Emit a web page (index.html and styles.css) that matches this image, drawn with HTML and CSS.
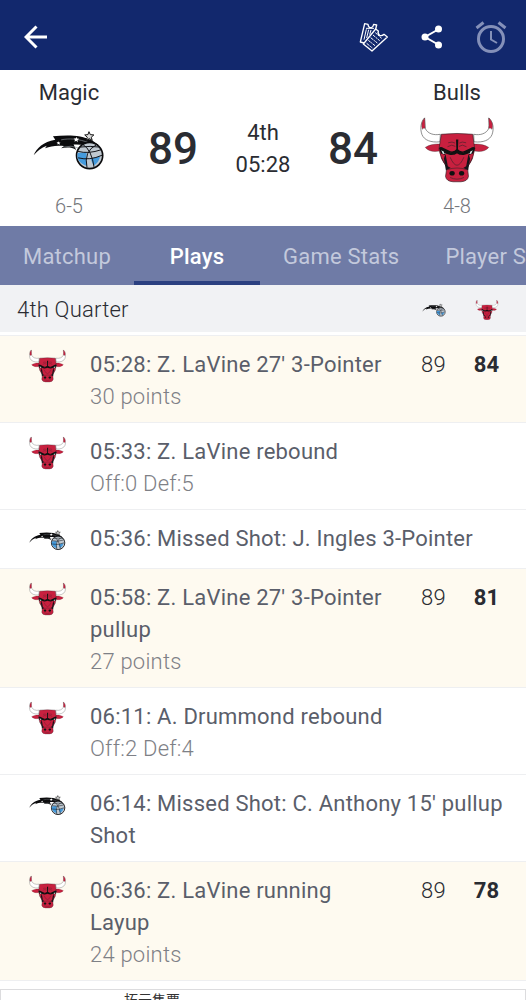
FILE: index.html
```html
<!DOCTYPE html>
<html lang="en">
    <head>
        <meta charset="UTF-8" />
        <meta name="viewport" content="width=device-width, initial-scale=1.0" />
        <title>Magic vs Bulls - Plays</title>
        <link rel="stylesheet" href="styles.css">
    </head>
    <body>
        <!-- Team logos -->
        <svg class="sprite" aria-hidden="true">
            <symbol id="bulls" viewBox="26 31 226 200">
                <path d="M88 83C68 87 49 81 42 65C40 54 42 43 40 33C29 45 25 64 32 84C39 101 59 109 87 106Z" fill="#fff" stroke="#555" stroke-width="2"/>
                <path d="M190 83C210 87 229 81 236 65C238 54 236 43 236 33C249 45 253 64 246 84C239 101 219 109 191 106Z" fill="#fff" stroke="#555" stroke-width="2"/>
                <path d="M40 33C31 43 29 55 33 68Q38 62 42 65C40 54 42 43 40 33Z" fill="#c8203f" stroke="#444" stroke-width="1"/>
                <path d="M236 33C247 43 250 55 246 68Q240 62 236 65C238 54 236 43 236 33Z" fill="#c8203f" stroke="#444" stroke-width="1"/>
                <path d="M87 113C70 112 55 115 42 123C51 134 67 138 86 134ZM191 113C208 112 223 115 236 123C227 134 211 138 192 134Z" fill="#c8203f" stroke="#222" stroke-width="1"/>
                <path d="M91 83Q139 78 187 83L193 128Q190 159 171 184L174 212Q171 227 151 228H127Q107 227 104 212L108 184Q88 159 84 128Z" fill="#c8203f" stroke="#311d24" stroke-width="2"/>
                <path d="M84 125Q89 118 98 125L119 135Q132 137 137 129L136 99H143L142 129Q147 137 160 135L181 125Q189 118 195 125L188 142Q171 150 151 147L139 140L127 147Q107 150 90 142Z" fill="#111"/>
                <path d="M101 141L119 137L139 151L159 137L177 141L172 156Q139 166 106 156Z" fill="#c8203f"/>
                <path d="M91 132L107 141L96 143ZM187 132L171 141L182 143Z" fill="#dce8e8"/>
                <path d="M104 143L111 181L120 186L105 193L99 157ZM174 143L167 181L158 186L173 193L179 157Z" fill="#16151a"/>
                <path d="M112 109Q125 104 133 110M146 110Q154 104 167 109M110 121Q124 112 134 120M145 120Q155 112 168 121M118 153Q139 202 160 153M92 154Q97 171 107 177M186 154Q181 171 171 177M109 191Q139 181 169 191M118 215Q139 225 160 215" fill="none" stroke="#44202a" stroke-width="2"/>
                <path d="M100 136L119 142Q133 143 139 135Q145 143 159 142L178 136" fill="none" stroke="#111" stroke-width="8"/>
                <ellipse cx="124" cy="202" rx="8" ry="7" fill="#111"/>
                <ellipse cx="153" cy="202" rx="8" ry="7" fill="#111"/>
            </symbol>
            <symbol id="magic" viewBox="26 41 220 120">
                <path d="M28 117C38 95 57 77 94 70L87 59C126 55 170 53 207 72L226 85L213 98C193 86 172 83 150 84L158 101C143 91 126 93 112 96L121 89C101 86 81 88 63 96L68 88C51 94 38 105 28 117Z" fill="#0b0b0d"/>
                <path d="M112 70C135 65 166 66 199 80M119 92Q143 86 163 94" fill="none" stroke="#8b9197" stroke-width="2"/>
                <circle cx="199" cy="118" r="40" fill="#bfc8d0" stroke="#0b0b0d" stroke-width="5"/>
                <path d="M162 110L190 107Q187 127 191 150Q169 143 162 126ZM202 128L231 120Q228 139 211 149Z" fill="#459bdd"/>
                <path d="M163 105Q195 114 235 100M164 125Q199 134 237 117M178 84Q205 99 213 155M220 85Q180 105 191 155M171 92Q201 88 229 92" fill="none" stroke="#101116" stroke-width="3"/>
                <path d="M197 45L201 54L212 55L204 62L207 72L198 66L189 72L192 62L184 55L194 54Z" fill="#ddd" stroke="#111" stroke-width="3"/>
                <path d="M159 61L161 66L167 67L162 71L163 77L158 73L153 76L154 70L150 66L156 66ZM104 74L106 78L110 78L107 81L108 85L104 83L101 84L101 80L98 77L103 77Z" fill="#fff"/>
            </symbol>
        </svg>

        <div class="app">
            <header class="topbar">
                <button class="icon-btn back" aria-label="Back">
                    <svg width="24" height="24" viewBox="0 0 24 24" fill="none" stroke="#fff" stroke-width="3"><path d="M23 12H3M12.500 1.500L2 12L12.500 22.500"/></svg>
                </button>
                <button class="icon-btn" aria-label="Tickets">
                    <svg width="30" height="30" viewBox="15 13 90 90" fill="none" stroke="#fff" stroke-width="4" stroke-linejoin="round">
                        <path d="M30 76L19 73L32 18L42 20Q43 31 52 30Q57 29 59 20L68 22L65 34"/>
                        <path d="M28 79L65 34L73 40Q70 49 77 53Q84 56 90 50L100 58L54 100Z"/>
                        <path d="M37 35L30 66M44 36L38 61M51 37L47 51M36 32H60" stroke-width="3"/>
                        <path d="M64 45L83 62M57 52L77 69M50 60L70 76M43 68L63 84M38 77L55 91" stroke-width="3" stroke-dasharray="9 2 5 2"/>
                    </svg>
                </button>
                <button class="icon-btn" aria-label="Share">
                    <svg width="22" height="24" viewBox="0 0 22 24" fill="#fff"><path d="M18 4L4 12L18 20" fill="none" stroke="#fff" stroke-width="2"/><circle cx="17.500" cy="4" r="3.500"/><circle cx="4" cy="12" r="3.500"/><circle cx="17.500" cy="20" r="3.500"/></svg>
                </button>
                <button class="icon-btn alarm" aria-label="Alerts">
                    <svg width="32" height="32" viewBox="0 0 32 32" fill="none" stroke="#8490b9" stroke-width="3"><circle cx="16" cy="18" r="12.500"/><path d="M1.500 7L8.500 1.500M23.500 1.500L30.500 7"/><path d="M16 10V18.500L22 22" stroke-width="2"/></svg>
                </button>
            </header>

            <section class="scoreboard">
                <div class="team">
                    <span class="team-name">Magic</span>
                    <svg class="team-logo magic" role="img" aria-label="Magic logo"><use href="#magic"/></svg>
                    <span class="record">6-5</span>
                </div>
                <strong class="score">89</strong>
                <div class="clock"><span>4th</span><span>05:28</span></div>
                <strong class="score">84</strong>
                <div class="team">
                    <span class="team-name">Bulls</span>
                    <svg class="team-logo" role="img" aria-label="Bulls logo"><use href="#bulls"/></svg>
                    <span class="record">4-8</span>
                </div>
            </section>

            <nav class="tabs">
                <button class="tab">Matchup</button>
                <button class="tab active">Plays</button>
                <button class="tab">Game Stats</button>
                <button class="tab">Player Stats</button>
            </nav>

            <main class="plays">
                <div class="quarter">
                    <h2>4th Quarter</h2>
                    <svg class="small-logo"><use href="#magic"/></svg>
                    <svg class="small-logo"><use href="#bulls"/></svg>
                </div>

                <ul class="play-list">
                    <li class="play scoring">
                        <svg class="play-logo"><use href="#bulls"/></svg>
                        <div class="play-text">
                            <p>05:28: Z. LaVine 27' 3-Pointer</p>
                            <p class="detail">30 points</p>
                        </div>
                        <span class="points">89</span>
                        <strong class="points">84</strong>
                    </li>
                    <li class="play">
                        <svg class="play-logo"><use href="#bulls"/></svg>
                        <div class="play-text">
                            <p>05:33: Z. LaVine rebound</p>
                            <p class="detail">Off:0 Def:5</p>
                        </div>
                    </li>
                    <li class="play">
                        <svg class="play-logo"><use href="#magic"/></svg>
                        <div class="play-text">
                            <p>05:36: Missed Shot: J. Ingles 3-Pointer</p>
                        </div>
                    </li>
                    <li class="play scoring">
                        <svg class="play-logo"><use href="#bulls"/></svg>
                        <div class="play-text">
                            <p>05:58: Z. LaVine 27' 3-Pointer pullup</p>
                            <p class="detail">27 points</p>
                        </div>
                        <span class="points">89</span>
                        <strong class="points">81</strong>
                    </li>
                    <li class="play">
                        <svg class="play-logo"><use href="#bulls"/></svg>
                        <div class="play-text">
                            <p>06:11: A. Drummond rebound</p>
                            <p class="detail">Off:2 Def:4</p>
                        </div>
                    </li>
                    <li class="play">
                        <svg class="play-logo"><use href="#magic"/></svg>
                        <div class="play-text">
                            <p>06:14: Missed Shot: C. Anthony 15' pullup Shot</p>
                        </div>
                    </li>
                    <li class="play scoring">
                        <svg class="play-logo"><use href="#bulls"/></svg>
                        <div class="play-text">
                            <p>06:36: Z. LaVine running Layup</p>
                            <p class="detail">24 points</p>
                        </div>
                        <span class="points">89</span>
                        <strong class="points">78</strong>
                    </li>
                </ul>

                <a class="ad" href="#" lang="zh-Hant">拓元售票</a>
            </main>
        </div>
    </body>
</html>
```
FILE: styles.css
```css
* {
    box-sizing: border-box;
}
body {
    margin: 0;
    font-family: Roboto, "Noto Sans CJK TC", sans-serif;
    font-size: 22px;
    line-height: 32px;
    letter-spacing: 0.01em;
    color: #2a2c32;
    background: #fff;
}
button {
    font: inherit;
    letter-spacing: inherit;
    border: 0;
    padding: 0;
    background: none;
    cursor: pointer;
}
.sprite {
    position: absolute;
    width: 0;
    height: 0;
}
.app {
    display: flex;
    flex-direction: column;
    height: 100vh;
}

/* Top bar */
.topbar {
    flex: none;
    display: flex;
    align-items: center;
    gap: 32px;
    height: 70px;
    padding: 4px 19px 0 24px;
    background: #12286d;
}
.icon-btn {
    display: flex;
}
.back {
    margin-right: auto;
}

/* Score */
.scoreboard {
    flex: none;
    display: grid;
    grid-template-columns: 1fr 70px 110px 70px 1fr;
    align-items: center;
    height: 156px;
    padding-top: 2px;
    text-align: center;
    letter-spacing: 0;
}
.team {
    display: flex;
    flex-direction: column;
    align-items: center;
}
.team-logo {
    width: 74px;
    height: 66px;
    margin: 8px 0 7px;
}
.team-logo.magic {
    width: 72px;
}
.record {
    font-size: 20px;
    font-weight: 300;
    color: #74767b;
}
.score {
    font-size: 44px;
    font-weight: 500;
}
.clock {
    display: flex;
    flex-direction: column;
}

/* Tabs */
.tabs {
    flex: none;
    display: flex;
    height: 59px;
    overflow: hidden;
    background: #6f7ba6;
}
.tab {
    flex: none;
    min-width: 126px;
    padding: 6px 23px 0;
    color: #c3c9dc;
    border-bottom: 4px solid transparent;
}
.tab.active {
    color: #fff;
    font-weight: 500;
    border-bottom-color: #2b4080;
}

/* Play by play */
.plays {
    flex: 1;
    min-height: 0;
    overflow-y: auto;
    scrollbar-width: none;
}
.quarter {
    display: flex;
    align-items: center;
    height: 47px;
    padding: 2px 27px 0 17px;
    gap: 29px;
    background: #f1f2f4;
}
.quarter h2 {
    margin: 0 auto 0 0;
    font-size: 22px;
    font-weight: 300;
}
.small-logo {
    width: 24px;
    height: 20px;
}
.play-list {
    list-style: none;
    margin: 3px 0 0;
    padding: 0;
    border-top: 1px solid #eeeff1;
}
.play {
    display: flex;
    align-items: flex-start;
    min-height: 59px;
    padding: 13px 13px 9px 29px;
    border-bottom: 1px solid #eeeff1;
}
.play.scoring {
    background: #fefaf0;
}
.play-logo {
    flex: none;
    width: 37px;
    height: 34px;
    margin-right: 24px;
}
.play-text {
    flex: 1;
    color: #5a5e6a;
}
.scoring .play-text {
    margin-right: 16px;
}
.play-text p {
    margin: 0;
}
.play-text .detail {
    font-weight: 300;
    color: #7e8086;
}
.points {
    width: 53px;
    text-align: center;
    font-weight: 300;
}
strong.points {
    font-weight: 700;
}

/* Ad slot */
.ad {
    display: block;
    height: 60px;
    margin-top: 8px;
    padding: 0 123px;
    border: 1px solid #dcdcde;
    font-size: 14px;
    line-height: 20px;
    letter-spacing: 0;
    color: #333;
    text-decoration: none;
}
```
